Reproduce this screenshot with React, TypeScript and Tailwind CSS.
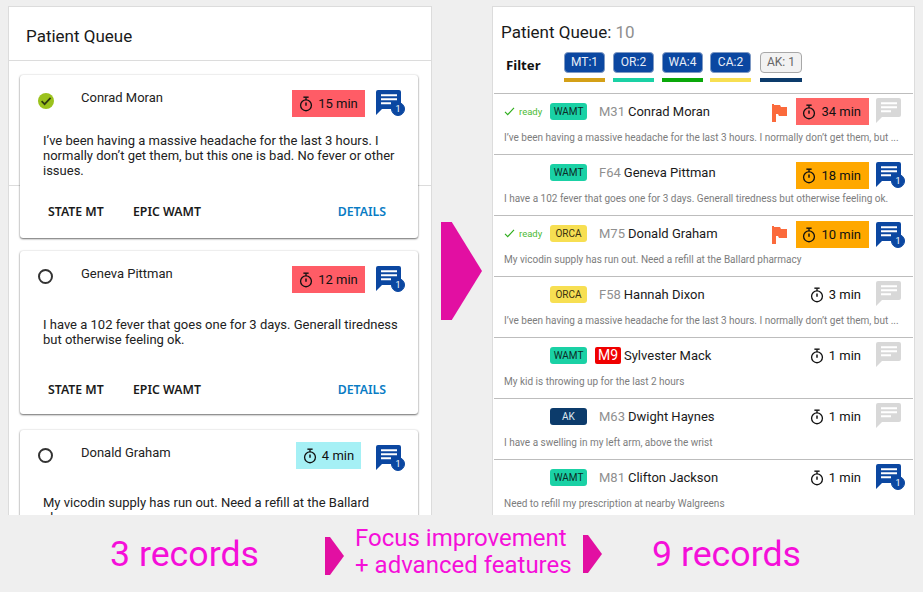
import React from "react";

const Stopwatch = ({ className = "" }: { className?: string }) => (
  <svg viewBox="0 0 16 18" className={className} fill="none" stroke="#111" strokeWidth="1.5">
    <circle cx="8" cy="10.5" r="6.2" />
    <path d="M5 1.2h6" strokeWidth="1.6" />
    <path d="M8 1.5v3" />
    <path d="M8 7.2v3.8" strokeWidth="1.7" />
  </svg>
);

const Chat = ({ on }: { on: boolean }) => (
  <div className="relative w-[29px] h-[25px]">
    <svg viewBox="0 0 25 25" className="absolute left-0 top-0 w-[25px] h-[25px]">
      <path d="M2 0h21a2 2 0 0 1 2 2v15a2 2 0 0 1-2 2H6l-6 6V2a2 2 0 0 1 2-2z" fill={on ? "#0b47a1" : "#d8d8d8"} />
      <path d="M5 5.2h16M5 9.2h16M5 13.2h10" stroke="#fff" strokeWidth="2" fill="none" />
    </svg>
    {on && (
      <span className="absolute right-0 bottom-[-1px] w-[14px] h-[14px] rounded-full bg-[#0b47a1] border border-[#0b47a1] text-white text-[9px] leading-[13px] text-center font-['Roboto',sans-serif]">
        1
      </span>
    )}
  </div>
);

const Circle = ({ done }: { done: boolean }) =>
  done ? (
    <svg viewBox="0 0 16 16" className="w-4 h-4">
      <circle cx="8" cy="8" r="8" fill="#9bc21d" />
      <path d="M3.6 8.2l3 3 6-6.4" fill="none" stroke="#2f3a10" strokeWidth="1.7" />
    </svg>
  ) : (
    <span className="block w-[15px] h-[15px] rounded-full border-2 border-[#333]" />
  );

const Card = ({
  name,
  done,
  time,
  timeCls,
  text,
  bodyTop,
  actionsTop,
  clip,
}: {
  name: string;
  done: boolean;
  time: string;
  timeCls: string;
  text: string;
  bodyTop: string;
  actionsTop: string;
  clip?: boolean;
}) => (
  <div className="ml-[11px] mr-[13px] h-[163px] shrink-0 bg-white rounded-[3px] shadow-[0_1px_2px_rgba(0,0,0,0.55),0_0_2px_rgba(0,0,0,0.15)] relative">
    <div className="flex items-start h-[42px] pt-[15px] pr-[13px]">
      <div className="w-[61px] pl-[18px] pt-[3px] shrink-0">
        <Circle done={done} />
      </div>
      <div className="text-[13px] leading-[15px] text-[#222] flex-1">{name}</div>
      <div className={`${timeCls} h-[27px] flex items-center justify-center gap-[5px] text-[13px] text-[#111]`}>
        <Stopwatch className="w-[14px] h-[16px]" />
        <span>{time}</span>
      </div>
      <div className="ml-[11px]">
        <Chat on />
      </div>
    </div>
    <p className={`${bodyTop} ml-[23px] mr-[20px] text-[13px] leading-[15px] text-[#222]`}>{text}</p>
    {!clip && (
      <div className={`${actionsTop} flex items-center pl-[28px] pr-[32px] font-['Noto_Sans',sans-serif] font-semibold text-[12.3px] leading-[16px]`}>
        <span className="text-[#1a1a1a] w-[85px]">STATE MT</span>
        <span className="text-[#1a1a1a] flex-1">EPIC WAMT</span>
        <span className="text-[#0a7cc4]">DETAILS</span>
      </div>
    )}
  </div>
);

type RowT = {
  ready?: boolean;
  tag: string;
  tagCls: string;
  id: string;
  red?: boolean;
  name: string;
  flag?: boolean;
  time: string;
  timeBg?: string;
  timerMt: string;
  chat: boolean;
  chatMt: string;
  text: string;
};

const rows: RowT[] = [
  { ready: true, tag: "WAMT", tagCls: "bg-[#1ad1a5] text-[#0d2b26]", id: "M31", name: "Conrad Moran", flag: true, time: "34 min", timeBg: "bg-[#ff6666]", timerMt: "mt-[4px]", chat: false, chatMt: "mt-[4px]", text: "I’ve been having a massive headache for the last 3 hours. I normally don’t get them, but ..." },
  { tag: "WAMT", tagCls: "bg-[#1ad1a5] text-[#0d2b26]", id: "F64", name: "Geneva Pittman", time: "18 min", timeBg: "bg-[#ffa800]", timerMt: "mt-[7px]", chat: true, chatMt: "mt-[7px]", text: "I have a 102 fever that goes one for 3 days. Generall tiredness but otherwise feeling ok." },
  { ready: true, tag: "ORCA", tagCls: "bg-[#f7df52] text-[#3a3210]", id: "M75", name: "Donald Graham", flag: true, time: "10 min", timeBg: "bg-[#ffa800]", timerMt: "mt-[5px]", chat: true, chatMt: "mt-[6px]", text: "My vicodin supply has run out. Need a refill at the Ballard pharmacy" },
  { tag: "ORCA", tagCls: "bg-[#f7df52] text-[#3a3210]", id: "F58", name: "Hannah Dixon", time: "3 min", timerMt: "mt-[4px]", chat: false, chatMt: "mt-[4px]", text: "I’ve been having a massive headache for the last 3 hours. I normally don’t get them, but ..." },
  { tag: "WAMT", tagCls: "bg-[#1ad1a5] text-[#0d2b26]", id: "M9", red: true, name: "Sylvester Mack", time: "1 min", timerMt: "mt-[4px]", chat: false, chatMt: "mt-[4px]", text: "My kid is throwing up for the last 2 hours" },
  { tag: "AK", tagCls: "bg-[#0c3b6b] text-[#dfe8f0]", id: "M63", name: "Dwight Haynes", time: "1 min", timerMt: "mt-[4px]", chat: false, chatMt: "mt-[4px]", text: "I have a swelling in my left arm, above the wrist" },
  { tag: "WAMT", tagCls: "bg-[#1ad1a5] text-[#0d2b26]", id: "M81", name: "Clifton Jackson", time: "1 min", timerMt: "mt-[4px]", chat: true, chatMt: "mt-[4px]", text: "Need to refill my prescription at nearby Walgreens" },
];

const Row = ({ r }: { r: RowT }) => (
  <div className="h-[61px] shrink-0 border-t border-[#bdbdbd] mx-[1px] pl-[10px] pr-[8px]">
    <div className="flex items-start h-[36px]">
      <div className="w-[46px] shrink-0 mt-[11px] h-[13px] flex items-center gap-[4px]">
        {r.ready && (
          <>
            <svg viewBox="0 0 12 10" className="w-[11px] h-[9px] shrink-0">
              <path d="M1 5.5l3 3L11 1" fill="none" stroke="#2fae1e" strokeWidth="1.3" />
            </svg>
            <span className="text-[9.5px] leading-[12px] text-[#4cbb35]">ready</span>
          </>
        )}
      </div>
      <div className={`w-[37px] h-[17px] mt-[9px] rounded-[3px] shrink-0 text-[10px] leading-[17px] text-center ${r.tagCls}`}>{r.tag}</div>
      <div className="ml-[8px] mt-[9px] h-[17px] flex items-center text-[13px] flex-1">
        {r.red ? (
          <span className="w-[26px] h-[17px] rounded-[2px] bg-[#f00000] text-white text-[14px] text-center leading-[17px] mr-[3px]">{r.id}</span>
        ) : (
          <span className="text-[#8f8f8f] ml-[4px] mr-[3px]">{r.id}</span>
        )}
        <span className="text-[#1a1a1a]">{r.name}</span>
      </div>
      {r.flag && (
        <svg viewBox="0 0 15 18" className="w-[15px] h-[18px] mt-[10px] mr-[9px] shrink-0">
          <path d="M0 0h2v1h6l1 2h6v9H7l-1-2H4v8H0z" fill="#fb6a3c" />
        </svg>
      )}
      <div className={`w-[73px] h-[27px] ${r.timerMt} ${r.timeBg ?? ""} flex items-center justify-end pr-[8px] gap-[5px] text-[13px] text-[#111] shrink-0`}>
        <Stopwatch className="w-[14px] h-[16px]" />
        <span>{r.time}</span>
      </div>
      <div className={`ml-[7px] ${r.chatMt}`}>
        <Chat on={r.chat} />
      </div>
    </div>
    <div className="pt-px text-[10px] leading-[14px] text-[#7d7d7d] whitespace-nowrap">{r.text}</div>
  </div>
);

const Arrow = ({ className = "" }: { className?: string }) => (
  <svg viewBox="0 0 19 38" preserveAspectRatio="none" className={className}>
    <path d="M0 0h5L19 19 5 38H0z" fill="#e20fa2" />
  </svg>
);

const chips = [
  { t: "MT:1", bar: "bg-[#d4a017]", cls: "w-[41px]", on: true },
  { t: "OR:2", bar: "bg-[#1ad1a5]", cls: "w-[41px] ml-[8px]", on: true },
  { t: "WA:4", bar: "bg-[#0aa80a]", cls: "w-[41px] ml-[8px]", on: true },
  { t: "CA:2", bar: "bg-[#f7df52]", cls: "w-[41px] ml-[7px]", on: true },
  { t: "AK: 1", bar: "bg-[#0c3b6b]", cls: "w-[42px] ml-[9px]", on: false },
];

export default function App() {
  return (
    <div className="w-[923px] h-[592px] bg-[#efefef] overflow-hidden font-['Roboto',sans-serif]">
      <div className="flex items-start pt-[6px] pl-[8px]">
        <div className="relative w-[424px] h-[509px] bg-white border border-[#dcdcdc] border-b-0 overflow-hidden flex flex-col">
          <div className="absolute left-0 right-0 top-[178px] h-px bg-[#dcdcdc]" />
          <div className="h-[54px] shrink-0 border-b border-[#dcdcdc] pl-[17px] pt-[18px] text-[17px] leading-[22px] text-[#1a1a1a]">Patient Queue</div>
          <div className="flex flex-col pt-[14px] gap-[13px]">
            <Card name="Conrad Moran" done time="15 min" timeCls="w-[73px] bg-[#ff5c66]" bodyTop="mt-[16px]" actionsTop="mt-[26px]" text="I’ve been having a massive headache for the last 3 hours. I normally don’t get them, but this one is bad. No fever or other issues." />
            <Card name="Geneva Pittman" done={false} time="12 min" timeCls="w-[73px] bg-[#ff5c66]" bodyTop="mt-[24px]" actionsTop="mt-[35px]" text="I have a 102 fever that goes one for 3 days. Generall tiredness but otherwise feeling ok." />
            <div className="h-[3px] -mt-[13px] shrink-0" />
            <Card name="Donald Graham" done={false} time="4 min" timeCls="w-[65px] mr-[4px] -mt-[3px] bg-[#a5f0f5]" bodyTop="mt-[23px]" actionsTop="" clip text="My vicodin supply has run out. Need a refill at the Ballard pharmacy" />
          </div>
        </div>
        <Arrow className="w-[41px] h-[98px] ml-[9px] mt-[216px] shrink-0" />
        <div className="ml-[10px] w-[423px] h-[509px] bg-white border border-[#dcdcdc] border-b-0 overflow-hidden flex flex-col">
          <div className="h-[86px] shrink-0 pl-[8px]">
            <div className="pt-[15px] text-[17px] leading-[20px] text-[#1a1a1a]">
              Patient Queue: <span className="text-[#8f8f8f]">10</span>
            </div>
            <div className="flex items-start mt-[10px]">
              <div className="w-[63px] pl-[5px] pt-[3px] font-['Noto_Sans',sans-serif] font-bold text-[13.2px] leading-[20px] text-[#111]">Filter</div>
              {chips.map((c) => (
                <div key={c.t} className={`${c.cls} flex flex-col shrink-0`}>
                  <div className={`h-[21px] rounded-[4px] border text-[12px] leading-[19px] text-center ${c.on ? "bg-[#0b47a1] border-[#7f9ac4] text-[#e8eef8]" : "bg-[#f2f2f2] border-[#a8a8a8] text-[#666]"}`}>{c.t}</div>
                  <div className={`h-[4px] mt-[5px] ${c.bar}`} />
                </div>
              ))}
            </div>
          </div>
          {rows.map((r) => (
            <Row key={r.name} r={r} />
          ))}
        </div>
      </div>
      <div className="h-[77px] flex items-center text-[#f50fd9]">
        <div className="w-[325px] pl-[110px] text-[35.7px] leading-[42px] whitespace-nowrap">3 records</div>
        <Arrow className="w-[19px] h-[38px] shrink-0 mt-[4px]" />
        <div className="ml-[11px] w-[228px] mb-[3px] text-[24px] leading-[27px] whitespace-nowrap">
          Focus improvement
          <br />+ advanced features
        </div>
        <Arrow className="w-[19px] h-[38px] shrink-0" />
        <div className="ml-[50px] text-[35.7px] leading-[42px] whitespace-nowrap">9 records</div>
      </div>
    </div>
  );
}
